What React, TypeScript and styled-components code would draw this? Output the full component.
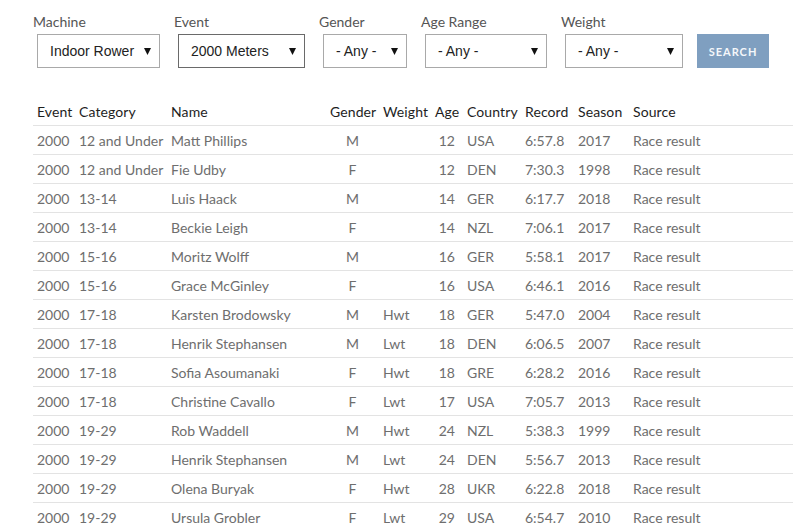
import React from "react";
import styled, { createGlobalStyle } from "styled-components";

const GlobalStyle = createGlobalStyle`
	body {
		margin: 0;
		background: #fff;
		font-family: Lato, "Open Sans", Arial, sans-serif;
	}
`;

const Page = styled.div`
	padding: 13px 0 0 33px;
	width: 760px;
`;

const Filters = styled.div`
	display: flex;
	align-items: flex-end;
	gap: 14px;
`;

const FilterGroup = styled.div`
	display: flex;
	flex-direction: column;
`;

const FilterLabel = styled.label`
	font-size: 14px;
	color: #555;
	line-height: 17px;
	margin-bottom: 4px;
`;

const SelectBox = styled.div<{ $width: number; $focused?: boolean }>`
	box-sizing: border-box;
	display: flex;
	align-items: center;
	justify-content: space-between;
	margin-left: 4px;
	width: ${(p) => p.$width}px;
	height: 34px;
	padding: 0 8px 0 12px;
	border: 1px solid ${(p) => (p.$focused ? "#6a6a6a" : "#a9a9a9")};
	font-family: "Liberation Sans", Arial, sans-serif;
	font-size: 14px;
	color: #222;
`;

const Arrow = styled.svg`
	width: 7px;
	height: 7px;
	flex-shrink: 0;
`;

const SearchButton = styled.button`
	width: 72px;
	height: 34px;
	border: none;
	background: #7f9fc0;
	color: #f4f7fa;
	font-family: inherit;
	font-weight: 700;
	font-size: 11px;
	letter-spacing: 1px;
	cursor: pointer;
`;

const Table = styled.table`
	margin-top: 29px;
	width: 760px;
	border-collapse: collapse;
	table-layout: fixed;
	font-size: 14px;
`;

const Th = styled.th<{ $align?: string }>`
	text-align: ${(p) => p.$align || "left"};
	font-weight: 400;
	color: #1e1e1e;
	height: 28px;
	padding: 0 4px;
	border-bottom: 1px solid #e3e3e3;
	white-space: nowrap;
	letter-spacing: 0.1px;
`;

const Td = styled.td<{ $align?: string }>`
	text-align: ${(p) => p.$align || "left"};
	color: #6e6e6e;
	height: 28px;
	padding: ${(p) => (p.$align === "right" ? "0 8px 0 4px" : "0 4px")};
	border-bottom: 1px solid #e3e3e3;
	white-space: nowrap;
`;

const columns = [
	{ title: "Event", width: 42 },
	{ title: "Category", width: 92 },
	{ title: "Name", width: 159 },
	{ title: "Gender", width: 53, align: "center" },
	{ title: "Weight", width: 52 },
	{ title: "Age", width: 32 },
	{ title: "Country", width: 58 },
	{ title: "Record", width: 53 },
	{ title: "Season", width: 55 },
	{ title: "Source", width: 164 },
];

const records = [
	["2000", "12 and Under", "Matt Phillips", "M", "", "12", "USA", "6:57.8", "2017", "Race result"],
	["2000", "12 and Under", "Fie Udby", "F", "", "12", "DEN", "7:30.3", "1998", "Race result"],
	["2000", "13-14", "Luis Haack", "M", "", "14", "GER", "6:17.7", "2018", "Race result"],
	["2000", "13-14", "Beckie Leigh", "F", "", "14", "NZL", "7:06.1", "2017", "Race result"],
	["2000", "15-16", "Moritz Wolff", "M", "", "16", "GER", "5:58.1", "2017", "Race result"],
	["2000", "15-16", "Grace McGinley", "F", "", "16", "USA", "6:46.1", "2016", "Race result"],
	["2000", "17-18", "Karsten Brodowsky", "M", "Hwt", "18", "GER", "5:47.0", "2004", "Race result"],
	["2000", "17-18", "Henrik Stephansen", "M", "Lwt", "18", "DEN", "6:06.5", "2007", "Race result"],
	["2000", "17-18", "Sofia Asoumanaki", "F", "Hwt", "18", "GRE", "6:28.2", "2016", "Race result"],
	["2000", "17-18", "Christine Cavallo", "F", "Lwt", "17", "USA", "7:05.7", "2013", "Race result"],
	["2000", "19-29", "Rob Waddell", "M", "Hwt", "24", "NZL", "5:38.3", "1999", "Race result"],
	["2000", "19-29", "Henrik Stephansen", "M", "Lwt", "24", "DEN", "5:56.7", "2013", "Race result"],
	["2000", "19-29", "Olena Buryak", "F", "Hwt", "28", "UKR", "6:22.8", "2018", "Race result"],
	["2000", "19-29", "Ursula Grobler", "F", "Lwt", "29", "USA", "6:54.7", "2010", "Race result"],
];

const filters = [
	{ label: "Machine", value: "Indoor Rower", width: 123 },
	{ label: "Event", value: "2000 Meters", width: 127, focused: true },
	{ label: "Gender", value: "- Any -", width: 84 },
	{ label: "Age Range", value: "- Any -", width: 122 },
	{ label: "Weight", value: "- Any -", width: 118 },
];

function DownArrow() {
	return (
		<Arrow viewBox="0 0 7 7">
			<polygon points="0,0 7,0 3.5,7" fill="#111" />
		</Arrow>
	);
}

export default function App() {
	return (
		<Page>
			<GlobalStyle />
			<Filters>
				{filters.map((f) => (
					<FilterGroup key={f.label}>
						<FilterLabel>{f.label}</FilterLabel>
						<SelectBox $width={f.width} $focused={f.focused}>
							<span>{f.value}</span>
							<DownArrow />
						</SelectBox>
					</FilterGroup>
				))}
				<SearchButton>SEARCH</SearchButton>
			</Filters>

			<Table>
				<colgroup>
					{columns.map((c) => (
						<col key={c.title} style={{ width: c.width }} />
					))}
				</colgroup>
				<thead>
					<tr>
						{columns.map((c) => (
							<Th key={c.title}>{c.title}</Th>
						))}
					</tr>
				</thead>
				<tbody>
					{records.map((r, i) => (
						<tr key={i}>
							{r.map((cell, j) => (
								<Td key={j} $align={j === 3 ? "center" : j === 5 ? "right" : undefined}>
									{cell}
								</Td>
							))}
						</tr>
					))}
				</tbody>
			</Table>
		</Page>
	);
}
